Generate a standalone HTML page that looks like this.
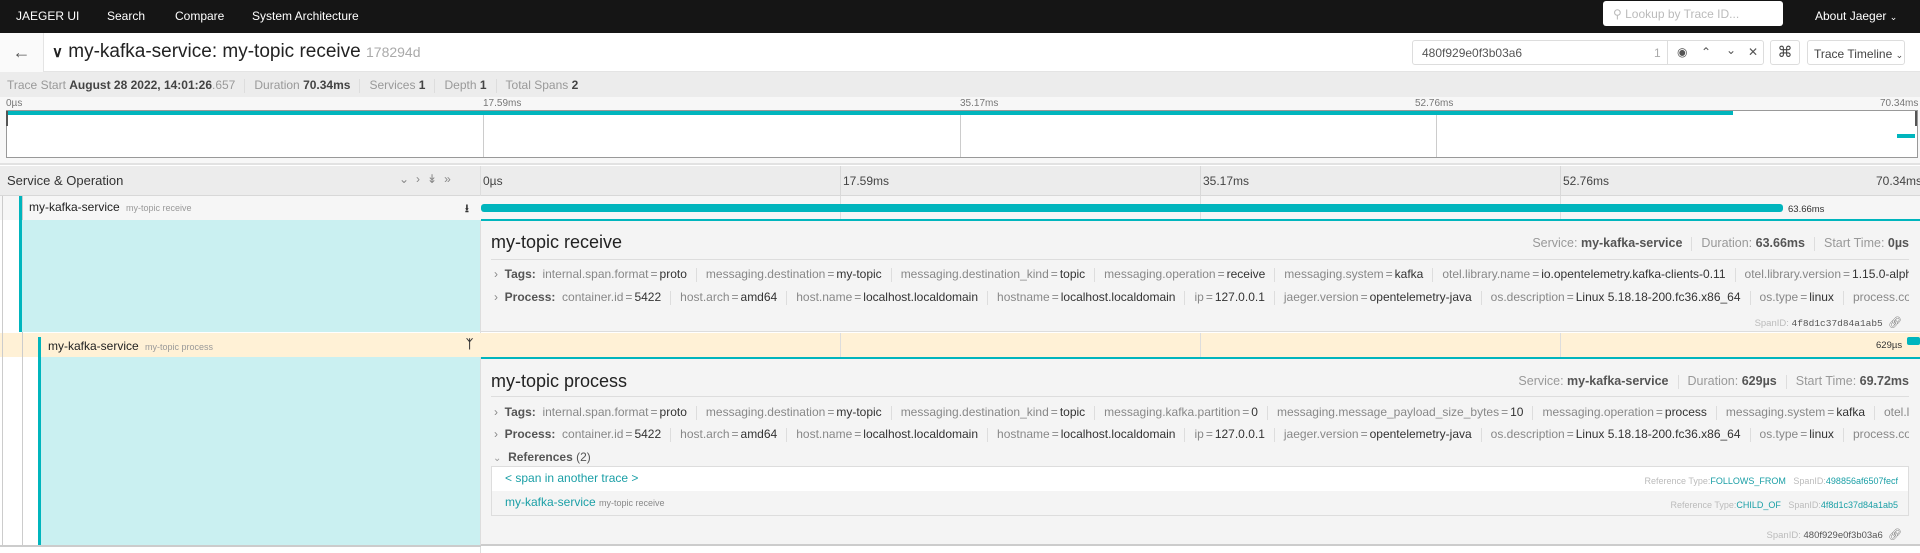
<!DOCTYPE html>
<html><head><meta charset="utf-8">
<style>
*{box-sizing:border-box;margin:0;padding:0}
body{width:1920px;height:553px;overflow:hidden;background:#fff;font-family:"Liberation Sans",sans-serif;color:#333;position:relative}
.a{position:absolute;white-space:nowrap}
.nav{left:0;top:0;width:1920px;height:33px;background:#151515;color:#fff;font-size:12px}
.nav span{position:absolute;top:9px}
.kv{font-size:12px;color:#888}
.kv b{font-weight:normal;color:#333}
.kv i{font-style:normal;margin:0 2px}
.sep{display:inline-block;width:1px;height:14px;background:#ddd;margin:0 9px;vertical-align:middle}
.teal{background:#00b5bd}
.link{color:#1a9fa6}
</style></head><body>
<div class="a nav">
<span style="left:16px">JAEGER UI</span>
<span style="left:107px">Search</span>
<span style="left:175px">Compare</span>
<span style="left:252px">System Architecture</span>
<div class="a" style="left:1603px;top:1px;width:180px;height:25px;background:#fff;border-radius:3px;color:#bbb;font-size:12px;padding:6px 0 0 10px">&#9906;&#xFE0E; Lookup by Trace ID...</div>
<span style="left:1815px">About Jaeger <span style="position:static;font-size:9px">&#8964;</span></span>
</div>
<div class="a" style="left:0;top:33px;width:1920px;height:39px;border-bottom:1px solid #e4e4e4"></div>
<div class="a" style="left:0;top:33px;width:44px;height:39px;border-right:1px solid #e4e4e4;background:#fafafa;font-size:18px;color:#555;text-align:center;line-height:38px">&#8592;</div>
<div class="a" style="left:52px;top:41px;font-size:19px;color:#222"><span style="font-size:15px;font-weight:bold">&#8744;</span> my-kafka-service: my-topic receive <span style="color:#aaa;font-size:14px">178294d</span></div>
<div class="a" style="left:1412px;top:40px;width:352px;height:25px;border:1px solid #ddd;border-radius:3px;font-size:12px;color:#555"><span class="a" style="left:9px;top:5px">480f929e0f3b03a6</span><span class="a" style="left:241px;top:5px;color:#aaa">1</span><div class="a" style="left:254px;top:0;width:1px;height:23px;background:#ddd"></div><span class="a" style="left:264px;top:4px">&#9673;</span><span class="a" style="left:288px;top:4px">&#8963;</span><span class="a" style="left:313px;top:2px">&#8964;</span><span class="a" style="left:335px;top:4px">&#10005;</span></div>
<div class="a" style="left:1770px;top:40px;width:30px;height:25px;border:1px solid #ddd;border-radius:3px;font-size:15px;text-align:center;line-height:23px;color:#444">&#8984;</div>
<div class="a" style="left:1807px;top:40px;width:98px;height:25px;border:1px solid #ddd;border-radius:3px;font-size:12px;padding:6px 0 0 6px;color:#444">Trace Timeline <span style="font-size:9px">&#8964;</span></div>
<div class="a" style="left:0;top:72px;width:1920px;height:25px;background:#ececec;font-size:12px;color:#999;padding:6px 0 0 7px">Trace Start <b style="color:#444">August 28 2022, 14:01:26</b>.657<span class="sep"></span>Duration <b style="color:#444">70.34ms</b><span class="sep"></span>Services <b style="color:#444">1</b><span class="sep"></span>Depth <b style="color:#444">1</b><span class="sep"></span>Total Spans <b style="color:#444">2</b></div>
<div class="a" style="left:0;top:97px;width:1920px;height:68px;background:#f7f7f7;border-bottom:2px solid #e2e2e2"></div>
<div class="a" style="top:98px;left:6px;font-size:10px;color:#777">0µs</div>
<div class="a" style="top:98px;left:483px;font-size:10px;color:#777">17.59ms</div>
<div class="a" style="top:98px;left:960px;font-size:10px;color:#777">35.17ms</div>
<div class="a" style="top:98px;left:1415px;font-size:10px;color:#777">52.76ms</div>
<div class="a" style="top:98px;left:1880px;font-size:10px;color:#777">70.34ms</div>
<div class="a" style="left:6px;top:110px;width:1912px;height:48px;background:#fff;border:1px solid #999"></div>
<div class="a" style="left:483px;top:111px;width:1px;height:46px;background:#ccc"></div>
<div class="a" style="left:960px;top:111px;width:1px;height:46px;background:#ccc"></div>
<div class="a" style="left:1436px;top:111px;width:1px;height:46px;background:#ccc"></div>
<div class="a teal" style="left:7px;top:111px;width:1726px;height:4px"></div>
<div class="a teal" style="left:1897px;top:134px;width:18px;height:4px"></div>
<div class="a" style="left:6px;top:111px;width:2px;height:15px;background:#555"></div>
<div class="a" style="left:1915px;top:111px;width:2px;height:15px;background:#555"></div>
<div class="a" style="left:0;top:166px;width:1920px;height:30px;background:#ececec;border-bottom:1px solid #d8d8d8"></div>
<div class="a" style="left:7px;top:173px;font-size:13px;color:#333">Service &amp; Operation</div>
<div class="a" style="left:399px;top:172px;font-size:12px;color:#888;letter-spacing:7px">&#8964;&#8250;&#8609;&#187;</div>
<div class="a" style="left:480px;top:166px;width:1px;height:387px;background:#ddd"></div>
<div class="a" style="left:483px;top:174px;font-size:12px;color:#444">0µs</div>
<div class="a" style="left:843px;top:174px;font-size:12px;color:#444">17.59ms</div>
<div class="a" style="left:1203px;top:174px;font-size:12px;color:#444">35.17ms</div>
<div class="a" style="left:1563px;top:174px;font-size:12px;color:#444">52.76ms</div>
<div class="a" style="left:1876px;top:174px;font-size:12px;color:#444">70.34ms</div>
<div class="a" style="left:840px;top:166px;width:1px;height:30px;background:#d8d8d8"></div>
<div class="a" style="left:1200px;top:166px;width:1px;height:30px;background:#d8d8d8"></div>
<div class="a" style="left:1560px;top:166px;width:1px;height:30px;background:#d8d8d8"></div>
<div class="a" style="left:0;top:196px;width:1920px;height:24px;background:#f6f6f6"></div>
<div class="a" style="left:2px;top:196px;width:1px;height:349px;background:#ccc"></div>
<div class="a" style="left:22px;top:196px;width:1px;height:349px;background:#ccc"></div>
<div class="a teal" style="left:19px;top:196px;width:3px;height:136px"></div>
<div class="a" style="left:29px;top:200px;font-size:12px;color:#222">my-kafka-service <span style="font-size:9px;color:#999;margin-left:3px">my-topic receive</span></div>
<div class="a" style="left:465px;top:200px;font-size:11px;font-weight:bold">&#11123;</div>
<div class="a" style="left:840px;top:196px;width:1px;height:24px;background:#ddd"></div>
<div class="a" style="left:1200px;top:196px;width:1px;height:24px;background:#ddd"></div>
<div class="a" style="left:1560px;top:196px;width:1px;height:24px;background:#ddd"></div>
<div class="a teal" style="left:481px;top:204px;width:1302px;height:8px;border-radius:3px"></div>
<div class="a" style="left:1788px;top:204px;font-size:9.5px;color:#333">63.66ms</div>
<div class="a" style="left:22px;top:220px;width:458px;height:112px;background:#caf0f1"></div>
<div class="a" style="left:481px;top:219px;width:1439px;height:113px;background:#f4f4f4;border-top:2px solid #00b5bd;border-bottom:1px solid #ddd"></div>
<div class="a" style="left:491px;top:232px;font-size:18px;color:#222">my-topic receive</div>
<div class="a" style="right:11px;top:236px;font-size:12.5px;color:#999">Service: <b style="color:#555">my-kafka-service</b><span class="sep"></span>Duration: <b style="color:#555">63.66ms</b><span class="sep"></span>Start Time: <b style="color:#555">0µs</b></div>
<div class="a" style="left:491px;top:259px;width:1418px;height:1px;background:#ddd"></div>
<div class="a kv" style="left:494px;top:267px;width:1415px;overflow:hidden"><span style="color:#888">&#8250;</span>&nbsp; <b style="font-weight:bold;color:#555">Tags:</b>&nbsp; internal.span.format<i>=</i><b>proto</b><span class="sep"></span>messaging.destination<i>=</i><b>my-topic</b><span class="sep"></span>messaging.destination_kind<i>=</i><b>topic</b><span class="sep"></span>messaging.operation<i>=</i><b>receive</b><span class="sep"></span>messaging.system<i>=</i><b>kafka</b><span class="sep"></span>otel.library.name<i>=</i><b>io.opentelemetry.kafka-clients-0.11</b><span class="sep"></span>otel.library.version<i>=</i><b>1.15.0-alpha</b><span class="sep"></span>otel.scope.n…</div>
<div class="a kv" style="left:494px;top:290px;width:1415px;overflow:hidden"><span style="color:#888">&#8250;</span>&nbsp; <b style="font-weight:bold;color:#555">Process:</b>&nbsp; container.id<i>=</i><b>5422</b><span class="sep"></span>host.arch<i>=</i><b>amd64</b><span class="sep"></span>host.name<i>=</i><b>localhost.localdomain</b><span class="sep"></span>hostname<i>=</i><b>localhost.localdomain</b><span class="sep"></span>ip<i>=</i><b>127.0.0.1</b><span class="sep"></span>jaeger.version<i>=</i><b>opentelemetry-java</b><span class="sep"></span>os.description<i>=</i><b>Linux 5.18.18-200.fc36.x86_64</b><span class="sep"></span>os.type<i>=</i><b>linux</b><span class="sep"></span>process.command_line<i>=</i><b>/usr…</b></div>
<div class="a" style="right:18px;top:316px;font-size:9.5px;color:#bbb">SpanID: <span style="font-family:'Liberation Mono',monospace;color:#555">4f8d1c37d84a1ab5</span> &nbsp;<span style="color:#777;font-size:11px">&#128279;&#xFE0E;</span></div>
<div class="a" style="left:0;top:333px;width:1920px;height:24px;background:#fff1d6"></div>
<div class="a" style="left:2px;top:333px;width:1px;height:212px;background:#ccc"></div>
<div class="a" style="left:22px;top:333px;width:1px;height:212px;background:#ccc"></div>
<div class="a teal" style="left:38px;top:337px;width:3px;height:208px"></div>
<div class="a" style="left:48px;top:339px;font-size:12px;color:#222">my-kafka-service <span style="font-size:9px;color:#999;margin-left:3px">my-topic process</span></div>
<div class="a" style="left:466px;top:337px;font-size:12px;font-weight:bold">&#5833;</div>
<div class="a" style="left:840px;top:333px;width:1px;height:24px;background:#ddd"></div>
<div class="a" style="left:1200px;top:333px;width:1px;height:24px;background:#ddd"></div>
<div class="a" style="left:1560px;top:333px;width:1px;height:24px;background:#ddd"></div>
<div class="a" style="left:1876px;top:340px;font-size:9.5px;color:#333">629µs</div>
<div class="a teal" style="left:1907px;top:337px;width:13px;height:8px;border-radius:2px"></div>
<div class="a" style="left:41px;top:357px;width:439px;height:188px;background:#caf0f1"></div>
<div class="a" style="left:481px;top:357px;width:1439px;height:189px;background:#f4f4f4;border-top:2px solid #00b5bd;border-bottom:2px solid #ccc"></div>
<div class="a" style="left:491px;top:371px;font-size:18px;color:#222">my-topic process</div>
<div class="a" style="right:11px;top:374px;font-size:12.5px;color:#999">Service: <b style="color:#555">my-kafka-service</b><span class="sep"></span>Duration: <b style="color:#555">629µs</b><span class="sep"></span>Start Time: <b style="color:#555">69.72ms</b></div>
<div class="a" style="left:491px;top:396px;width:1418px;height:1px;background:#ddd"></div>
<div class="a kv" style="left:494px;top:405px;width:1415px;overflow:hidden"><span style="color:#888">&#8250;</span>&nbsp; <b style="font-weight:bold;color:#555">Tags:</b>&nbsp; internal.span.format<i>=</i><b>proto</b><span class="sep"></span>messaging.destination<i>=</i><b>my-topic</b><span class="sep"></span>messaging.destination_kind<i>=</i><b>topic</b><span class="sep"></span>messaging.kafka.partition<i>=</i><b>0</b><span class="sep"></span>messaging.message_payload_size_bytes<i>=</i><b>10</b><span class="sep"></span>messaging.operation<i>=</i><b>process</b><span class="sep"></span>messaging.system<i>=</i><b>kafka</b><span class="sep"></span>otel.library.name<i>=</i><b>io.o…</b></div>
<div class="a kv" style="left:494px;top:427px;width:1415px;overflow:hidden"><span style="color:#888">&#8250;</span>&nbsp; <b style="font-weight:bold;color:#555">Process:</b>&nbsp; container.id<i>=</i><b>5422</b><span class="sep"></span>host.arch<i>=</i><b>amd64</b><span class="sep"></span>host.name<i>=</i><b>localhost.localdomain</b><span class="sep"></span>hostname<i>=</i><b>localhost.localdomain</b><span class="sep"></span>ip<i>=</i><b>127.0.0.1</b><span class="sep"></span>jaeger.version<i>=</i><b>opentelemetry-java</b><span class="sep"></span>os.description<i>=</i><b>Linux 5.18.18-200.fc36.x86_64</b><span class="sep"></span>os.type<i>=</i><b>linux</b><span class="sep"></span>process.command_line<i>=</i><b>/usr…</b></div>
<div class="a" style="left:493px;top:450px;font-size:12px;color:#555"><span style="color:#999;font-size:10px">&#8964;</span>&nbsp; <b>References</b> (2)</div>
<div class="a" style="left:491px;top:466px;width:1418px;height:50px;border:1px solid #ddd;background:#f4f4f4"></div>
<div class="a" style="left:492px;top:467px;width:1416px;height:24px;background:#fff"></div>
<div class="a link" style="left:505px;top:471px;font-size:12px">&lt; span in another trace &gt;</div>
<div class="a link" style="left:505px;top:495px;font-size:12px">my-kafka-service <span style="font-size:9px;color:#888">my-topic receive</span></div>
<div class="a" style="right:22px;top:476px;font-size:9px;color:#bbb">Reference Type:<span class="link">FOLLOWS_FROM</span> &nbsp; SpanID:<span class="link">498856af6507fecf</span></div>
<div class="a" style="right:22px;top:500px;font-size:9px;color:#bbb">Reference Type:<span class="link">CHILD_OF</span> &nbsp; SpanID:<span class="link">4f8d1c37d84a1ab5</span></div>
<div class="a" style="right:18px;top:528px;font-size:9.5px;color:#bbb">SpanID: <span style="color:#555">480f929e0f3b03a6</span> &nbsp;<span style="color:#777;font-size:11px">&#128279;&#xFE0E;</span></div>
<div class="a" style="left:0;top:545px;width:481px;height:2px;background:#ccc"></div>
</body></html>
